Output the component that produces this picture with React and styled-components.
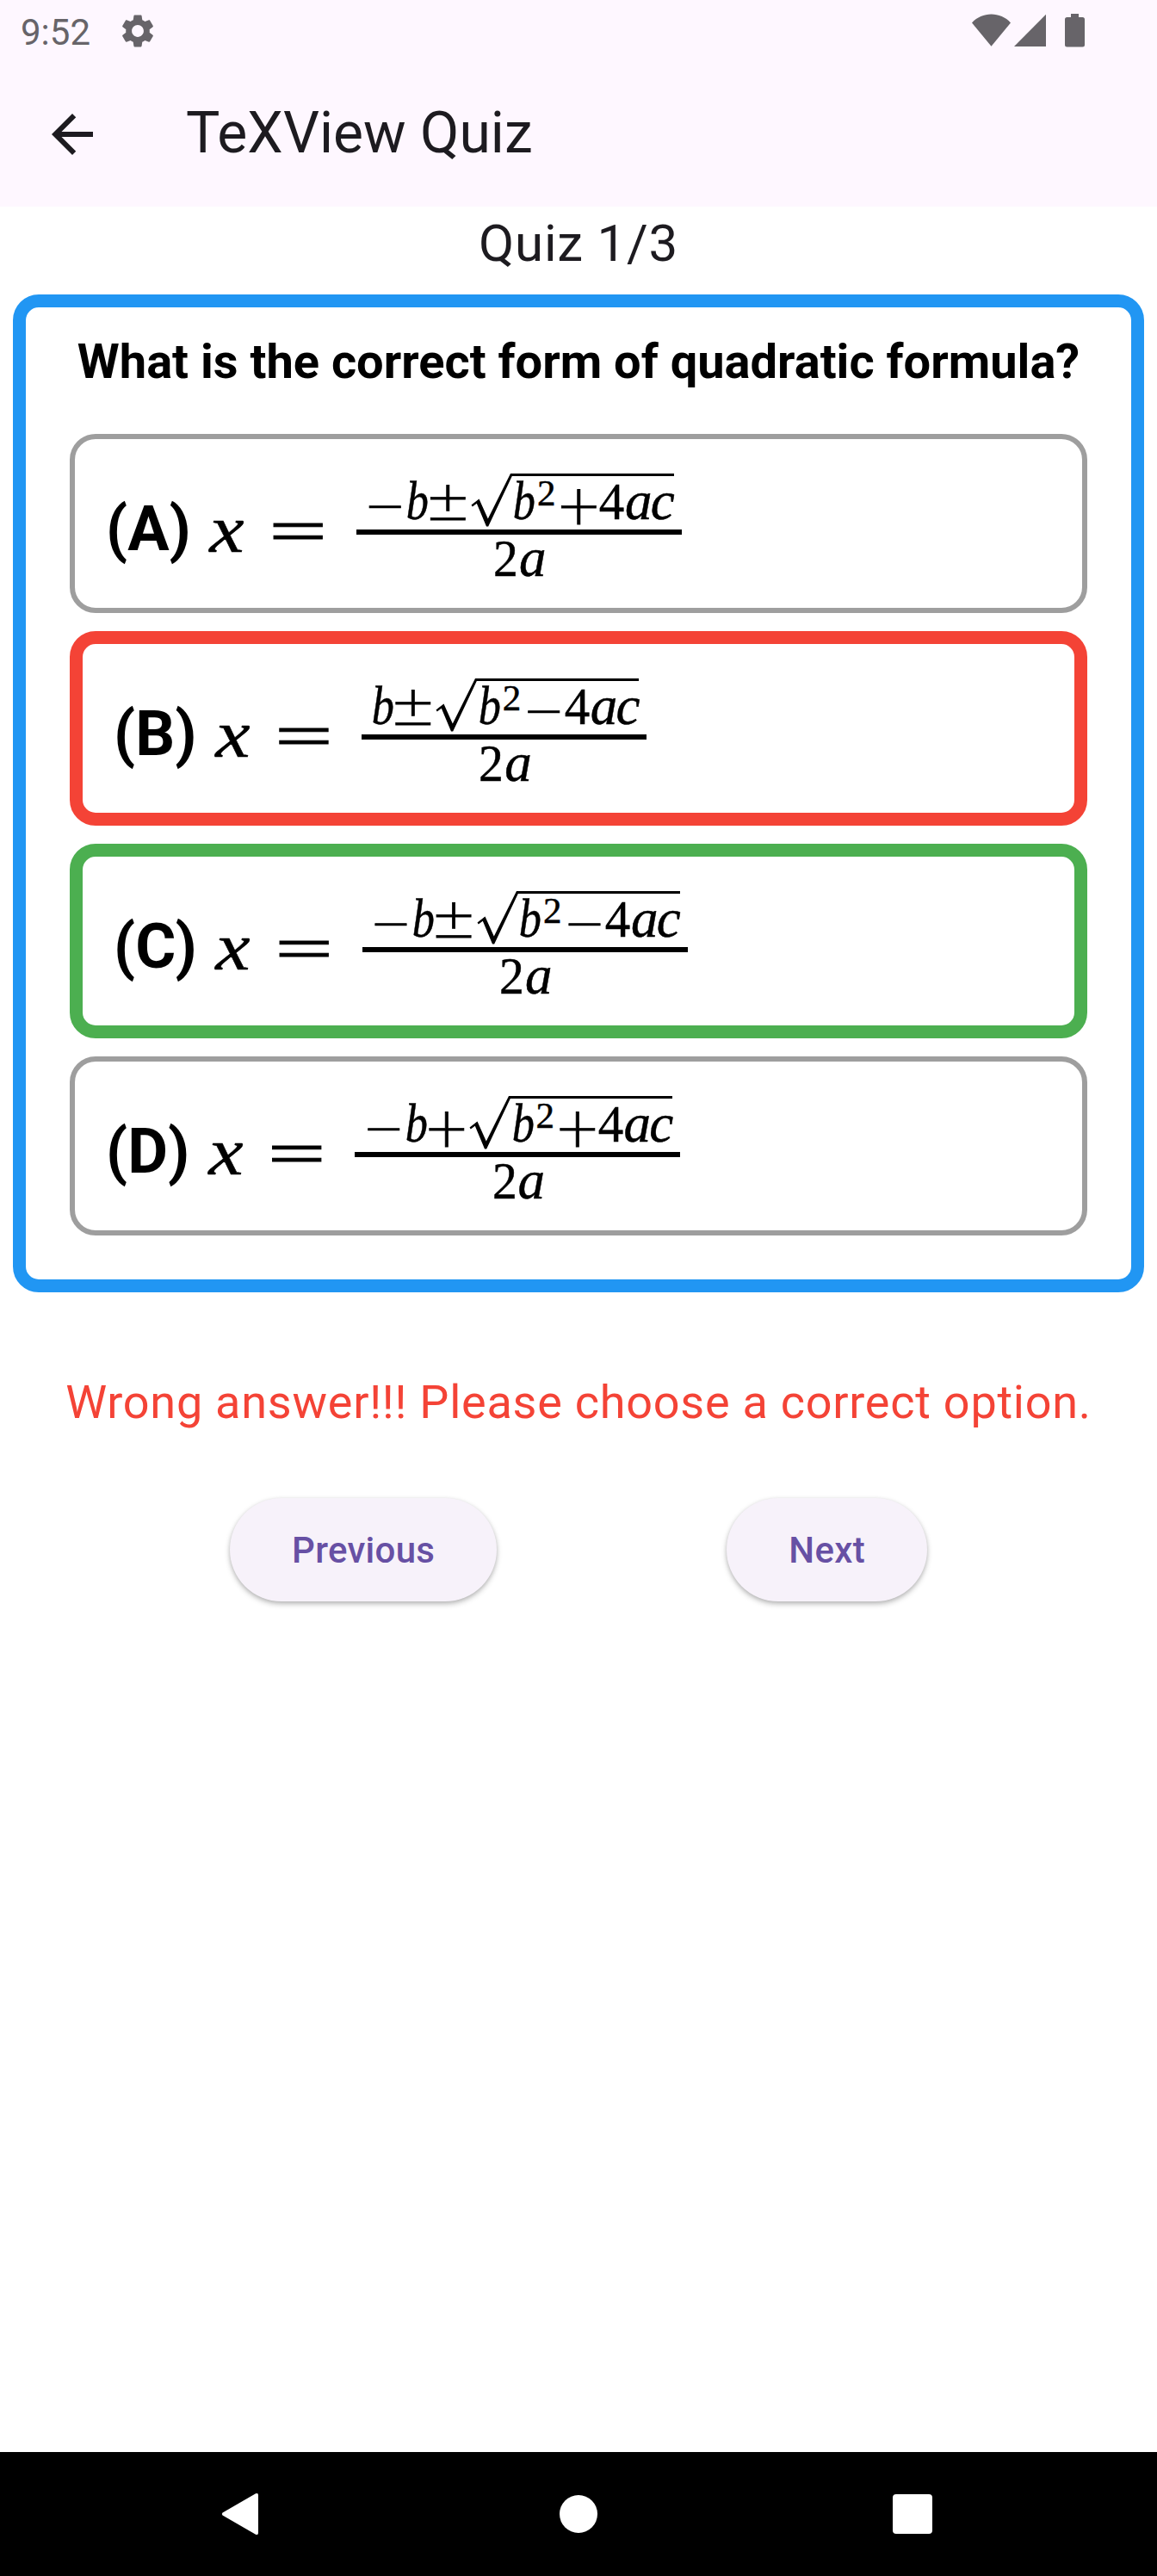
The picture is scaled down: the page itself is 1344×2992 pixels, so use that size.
import React from "react";
import styled, { createGlobalStyle } from "styled-components";

const GlobalStyle = createGlobalStyle`
  * { box-sizing: border-box; }
  body { margin: 0; background: #fff; font-family: Roboto, sans-serif; }
`;

const Screen = styled.div`
  display: flex;
  flex-direction: column;
  width: 1344px;
  height: 2992px;
  background: #fff;
  color: #1d1b20;
`;

const StatusBar = styled.header`
  display: flex;
  align-items: center;
  height: 72px;
  padding: 0 84px 0 24px;
  background: #fef7ff;
  color: #676469;
`;

const Clock = styled.span`
  font-size: 42px;
  line-height: 72px;
  padding-top: 3px;
`;

const StatusIcon = styled.svg`
  display: block;
  width: ${(p) => p.$w}px;
  height: ${(p) => p.$h}px;
  margin-left: ${(p) => p.$gap}px;
  fill: currentColor;
`;

const StatusRight = styled.div`
  display: flex;
  align-items: center;
  margin: 0 0 2px auto;
`;

const AppBar = styled.div`
  display: flex;
  align-items: center;
  height: 168px;
  padding-left: 48px;
  background: #fef7ff;
`;

const BackIcon = styled.svg`
  width: 72px;
  height: 72px;
  fill: #1d1b20;
`;

const Title = styled.h1`
  margin: 0 0 3px 96px;
  font-size: 66px;
  font-weight: 400;
  line-height: 84px;
`;

const Counter = styled.div`
  height: 102px;
  font-size: 60px;
  line-height: 85px;
  letter-spacing: 0.75px;
  text-align: center;
`;

const QuizCard = styled.section`
  margin: 0 15px;
  padding: 0 51px 51px;
  border: 15px solid #2196f3;
  border-radius: 30px;
  color: #000;
`;

const Question = styled.h2`
  margin: 0 0 21px;
  font-size: 56px;
  font-weight: 700;
  line-height: 126px;
  text-align: center;
  white-space: nowrap;
`;

const Options = styled.div`
  display: flex;
  flex-direction: column;
  gap: 21px;
`;

const tones = {
  idle: { color: "#9e9e9e", width: 6 },
  wrong: { color: "#f44336", width: 15 },
  right: { color: "#4caf50", width: 15 },
};

const Option = styled.div`
  display: flex;
  align-items: flex-start;
  height: ${(p) => 196 + 2 * tones[p.$tone].width}px;
  padding-left: 36px;
  border: ${(p) => tones[p.$tone].width}px solid ${(p) => tones[p.$tone].color};
  border-radius: 30px;
`;

const OptionLabel = styled.span`
  margin-top: 14px;
  font-size: 72px;
  font-weight: 700;
  line-height: 182px;
`;

const Equation = styled.div`
  display: flex;
  align-items: flex-start;
  padding-left: 19px;
  font-family: "Liberation Serif", serif;
`;

const Lhs = styled.div`
  display: flex;
  margin-top: 10px;
  line-height: 182px;
`;

const Cell = styled.span`
  display: flex;
  justify-content: center;
  flex: none;
  width: ${(p) => p.$w}px;
`;

const Glyph = styled.span`
  display: block;
  font-family: ${(p) => (p.$op ? '"DejaVu Sans", sans-serif' : '"Liberation Serif", serif')};
  font-weight: ${(p) => (p.$op ? 200 : 400)};
  font-style: ${(p) => (p.$italic ? "italic" : "normal")};
  font-size: ${(p) => p.$size}px;
  -webkit-text-stroke: ${(p) => p.$stroke || 0.5}px #000;
  transform: translate(${(p) => p.$dx || 0}px, ${(p) => p.$dy || 0}px) scale(${(p) => p.$sx || 1}, ${(p) => p.$sy || 1});
`;

const Fraction = styled.div`
  display: flex;
  flex-direction: column;
  margin: 40px 0 0 29px;
`;

const Numerator = styled.div`
  display: flex;
  height: 65px;
  padding: 0 9px;
  line-height: 65px;
`;

const Bar = styled.div`
  height: 6px;
  background: #000;
`;

const Denominator = styled.div`
  display: flex;
  justify-content: center;
  height: 55px;
  line-height: 55px;
`;

const Surd = styled.svg`
  flex: none;
  width: 51px;
  height: 65px;
  overflow: visible;
`;

const Radicand = styled.div`
  display: flex;
  height: 65px;
  border-top: 3px solid #000;
  line-height: 59px;
`;

const Message = styled.p`
  margin: 0;
  height: 239px;
  font-size: 54px;
  line-height: 256px;
  letter-spacing: 0.75px;
  text-align: center;
  color: #f44336;
  white-space: nowrap;
`;

const Actions = styled.div`
  display: flex;
  justify-content: space-evenly;
`;

const Button = styled.button`
  height: 120px;
  padding: 2px 72px 0;
  border: 0;
  border-radius: 60px;
  background: #f7f2fa;
  box-shadow: 0 3px 6px rgba(0, 0, 0, 0.26), 0 1px 4px rgba(0, 0, 0, 0.08);
  color: #6750a4;
  font: 500 42px/118px Roboto, sans-serif;
  letter-spacing: 0.3px;
`;

const NavBar = styled.nav`
  display: flex;
  justify-content: center;
  align-items: center;
  height: 144px;
  margin-top: auto;
  background: #000;
`;

const NavItem = styled.div`
  display: flex;
  justify-content: center;
  width: 388px;
`;

const NavIcon = styled.svg`
  width: 72px;
  height: 72px;
  fill: #fff;
`;

const atoms = {
  "−": { w: 47, op: true, size: 58, dx: 1, dy: 5, stroke: 0.8 },
  "±": { w: 47, op: true, size: 64, dx: 1, dy: 0, stroke: 0.8 },
  "+": { w: 47, op: true, size: 64, dx: 1, dy: 5, stroke: 0.8 },
  b: { w: 26, italic: true, size: 63, sx: 0.83, dx: 2 },
  a: { w: 32, italic: true, size: 63, dx: 1 },
  c: { w: 26, italic: true, size: 63 },
  2: { w: 30, size: 62, sx: 0.93, dx: 1 },
  4: { w: 30, size: 62, sx: 0.95, dx: 1 },
  "²": { text: "2", w: 28, size: 43, dx: 1, dy: -10 },
  x: { w: 46, italic: true, size: 79, sx: 1.15, dy: 4 },
  "=": { w: 77, op: true, size: 90, dy: 4, stroke: 1 },
};

function Atom({ name }) {
  const a = atoms[name];
  return (
    <Cell $w={a.w}>
      <Glyph
        $op={a.op}
        $italic={a.italic}
        $size={a.size}
        $stroke={a.stroke}
        $dx={a.dx}
        $dy={a.dy}
        $sx={a.sx}
        $sy={a.sy}
      >
        {a.text || name}
      </Glyph>
    </Cell>
  );
}

function MathRow({ source }) {
  return [...source].map((ch, i) => <Atom key={i} name={ch} />);
}

function QuizOption({ label, tone, lead, radicand }) {
  return (
    <Option $tone={tone}>
      <OptionLabel>({label})</OptionLabel>
      <Equation>
        <Lhs>
          <MathRow source="x" />
          <Cell $w={21} />
          <MathRow source="=" />
        </Lhs>
        <Fraction>
          <Numerator>
            <MathRow source={lead} />
            <Surd viewBox="0 0 51 65">
              <path d="M4.5 36.5 13.5 29.5 23.8 52.5 50 0H52.5V1.5L24.2 61.5H22L10.8 34.8 5.8 38.4Z" />
            </Surd>
            <Radicand>
              <MathRow source={radicand} />
            </Radicand>
          </Numerator>
          <Bar />
          <Denominator>
            <MathRow source="2a" />
          </Denominator>
        </Fraction>
      </Equation>
    </Option>
  );
}

const options = [
  { label: "A", tone: "idle", lead: "−b±", radicand: "b²+4ac" },
  { label: "B", tone: "wrong", lead: "b±", radicand: "b²−4ac" },
  { label: "C", tone: "right", lead: "−b±", radicand: "b²−4ac" },
  { label: "D", tone: "idle", lead: "−b+", radicand: "b²+4ac" },
];

export default function App() {
  return (
    <>
      <GlobalStyle />
      <Screen>
        <StatusBar>
          <Clock>9:52</Clock>
          <StatusIcon $w={46} $h={46} $gap={32} viewBox="0 0 24 24">
            <path d="M19.14 12.94c.04-.3.06-.61.06-.94 0-.32-.02-.64-.07-.94l2.03-1.58c.18-.14.23-.41.12-.61l-1.92-3.32c-.12-.22-.37-.29-.59-.22l-2.39.96c-.5-.38-1.03-.7-1.62-.94l-.36-2.54c-.04-.24-.24-.41-.48-.41h-3.84c-.24 0-.43.17-.47.41l-.36 2.54c-.59.24-1.13.57-1.62.94l-2.39-.96c-.22-.08-.47 0-.59.22L2.74 8.87c-.12.21-.08.47.12.61l2.03 1.58c-.05.3-.09.63-.09.94s.02.64.07.94l-2.03 1.58c-.18.14-.23.41-.12.61l1.92 3.32c.12.22.37.29.59.22l2.39-.96c.5.38 1.03.7 1.62.94l.36 2.54c.05.24.24.41.48.41h3.84c.24 0 .44-.17.47-.41l.36-2.54c.59-.24 1.13-.56 1.62-.94l2.39.96c.22.08.47 0 .59-.22l1.92-3.32c.12-.22.07-.47-.12-.61l-2.01-1.58zM12 15.6c-1.98 0-3.6-1.62-3.6-3.6s1.62-3.6 3.6-3.6 3.6 1.62 3.6 3.6-1.62 3.6-3.6 3.6z" />
          </StatusIcon>
          <StatusRight>
            <StatusIcon $w={45} $h={38} $gap={0} viewBox="0 0 45 38">
              <path d="M0 10.5C6 4 14 .6 22.5 .6S39 4 45 10.5L22.5 37.8Z" />
            </StatusIcon>
            <StatusIcon $w={37} $h={38} $gap={4} viewBox="0 0 37 38">
              <path d="M37 .8V38H0Z" />
            </StatusIcon>
            <StatusIcon $w={23} $h={39} $gap={22} viewBox="0 0 23 39">
              <path d="M7 0H16V4H20.5A2.5 2.5 0 0 1 23 6.5V36A2.5 2.5 0 0 1 20.5 38.5H2.5A2.5 2.5 0 0 1 0 36V6.5A2.5 2.5 0 0 1 2.5 4H7Z" />
            </StatusIcon>
          </StatusRight>
        </StatusBar>
        <AppBar>
          <BackIcon viewBox="0 0 24 24">
            <path d="M20 11H7.83l5.59-5.59L12 4l-8 8 8 8 1.41-1.41L7.83 13H20v-2z" />
          </BackIcon>
          <Title>TeXView Quiz</Title>
        </AppBar>
        <Counter>Quiz 1/3</Counter>
        <QuizCard>
          <Question>What is the correct form of quadratic formula?</Question>
          <Options>
            {options.map((o) => (
              <QuizOption key={o.label} {...o} />
            ))}
          </Options>
        </QuizCard>
        <Message>Wrong answer!!! Please choose a correct option.</Message>
        <Actions>
          <Button>Previous</Button>
          <Button>Next</Button>
        </Actions>
        <NavBar>
          <NavItem>
            <NavIcon viewBox="0 0 72 72">
              <path d="M10.5 34.5 49 12.3Q52 11 52 14V58Q52 61 49 59.7L10.5 37.5Q9 36 10.5 34.5Z" />
            </NavIcon>
          </NavItem>
          <NavItem>
            <NavIcon viewBox="0 0 72 72">
              <circle cx="36" cy="36" r="22" />
            </NavIcon>
          </NavItem>
          <NavItem>
            <NavIcon viewBox="0 0 72 72">
              <rect x="13" y="13" width="46" height="46" rx="4" />
            </NavIcon>
          </NavItem>
        </NavBar>
      </Screen>
    </>
  );
}
